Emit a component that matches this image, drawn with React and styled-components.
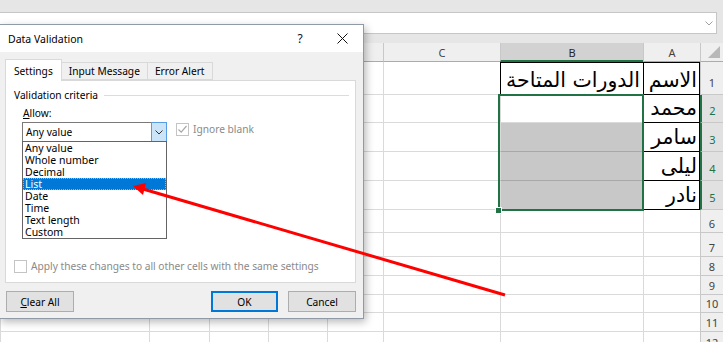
import React from 'react';
import styled, { createGlobalStyle } from 'styled-components';

const UI_FONT = `"Noto Sans", "Open Sans", "Liberation Sans", sans-serif`;
const AR_FONT = `"DejaVu Sans", "Noto Sans", sans-serif`;

const GlobalStyle = createGlobalStyle`
  html, body { margin: 0; padding: 0; overflow: hidden; background: #e6e6e6; }
  * { box-sizing: border-box; }
`;

const Page = styled.div`
  position: relative;
  width: 723px;
  height: 342px;
  overflow: hidden;
  background: #e6e6e6;
  padding-top: 12px;
  display: flex;
  flex-direction: column;
  font-family: ${UI_FONT};
`;

const FormulaBar = styled.div`
  flex-shrink: 0;
  height: 22px;
  margin-right: 6px;
  background: #fff;
  border: 1px solid #c6c6c6;
  border-left: none;
  display: flex;
  align-items: center;
  justify-content: flex-end;
  padding-right: 3px;
`;

const Sheet = styled.div`
  flex-shrink: 0;
  margin-top: 9px;
  display: grid;
  direction: rtl;
  grid-template-columns: 23px 57px 143px 117px 56px 59px 59px 60px 1fr;
  grid-template-rows: 19px 33px 28px 29px 29px 29px 23px 24px 19px 19px 18px 19px 20px;
  background: #fff;
`;

const Corner = styled.div`
  background: #efefef;
  border-bottom: 1px solid #ababab;
  border-left: 1px solid #c8c8c8;
  display: flex;
  align-items: flex-end;
  justify-content: flex-start;
  padding: 0 3px 3px 0;
`;

const ColHeader = styled.div`
  background: ${p => (p.$sel ? '#d2d2d2' : '#efefef')};
  color: ${p => (p.$sel ? '#262626' : '#444')};
  border-left: 1px solid #c8c8c8;
  border-bottom: ${p => (p.$sel ? '2px solid #217346' : '1px solid #ababab')};
  font-size: 11px;
  display: flex;
  align-items: center;
  justify-content: center;
  padding-top: ${p => (p.$sel ? '1px' : '0')};
`;

const RowHeader = styled.div`
  background: ${p => (p.$sel ? '#e1e1e1' : '#efefef')};
  color: ${p => (p.$sel ? '#217346' : '#444')};
  border-bottom: 1px solid #c8c8c8;
  border-left: ${p => (p.$sel ? '2px solid #217346' : '1px solid #c8c8c8')};
  font-size: 11px;
  display: flex;
  align-items: flex-end;
  justify-content: center;
  padding-bottom: ${p => (p.$big ? '4px' : '1px')};
`;

const Cell = styled.div`
  background: ${p => (p.$shade ? '#c8c8c8' : '#fff')};
  border-left: 1px solid ${p => (p.$boxed ? '#000' : '#dadada')};
  border-bottom: 1px solid ${p => (p.$boxed ? '#000' : p.$shade ? '#a8a8a8' : '#dadada')};
  box-shadow: ${p =>
    [p.$top ? 'inset 0 1px 0 #000' : null, p.$right ? 'inset -1px 0 0 #000' : null]
      .filter(Boolean)
      .join(', ') || 'none'};
  display: flex;
  align-items: flex-end;
  justify-content: flex-start;
  padding: 0 3px 4px;
  font-family: ${AR_FONT};
  font-size: 20.5px;
  line-height: 1;
  color: #000;
  white-space: nowrap;
  overflow: hidden;
`;

const Selection = styled.div`
  position: absolute;
  left: 498px;
  top: 94px;
  width: 146px;
  height: 117px;
  border: 2px solid #217346;
  pointer-events: none;
`;

const FillHandle = styled.div`
  position: absolute;
  left: -5px;
  bottom: -5px;
  width: 7px;
  height: 7px;
  background: #217346;
  border: 1px solid #fff;
`;

/* Dialog */
const Dialog = styled.div`
  position: absolute;
  left: -1px;
  top: 24px;
  width: 365px;
  height: 295px;
  border: 1px solid #8f9aa6;
  background: #f0f0f0;
  box-shadow: 2px 3px 8px rgba(0, 0, 0, 0.28);
  display: flex;
  flex-direction: column;
  font-family: ${UI_FONT};
  font-size: 10.2px;
  color: #000;
`;

const TitleBar = styled.div`
  height: 27px;
  background: #fff;
  display: flex;
  align-items: center;
  padding-left: 8px;
  font-size: 10.5px;
`;

const TitleText = styled.div`
  flex: 1;
`;

const TitleButton = styled.div`
  width: 42px;
  height: 27px;
  display: flex;
  align-items: center;
  justify-content: center;
  font-size: 12px;
  color: #111;
`;

const Body = styled.div`
  flex: 1;
  display: flex;
  flex-direction: column;
  padding: 6px 7px 0 5px;
`;

const Tabs = styled.div`
  height: 22px;
  display: flex;
  align-items: flex-end;
`;

const Tab = styled.div`
  height: ${p => (p.$active ? '22px' : '18px')};
  padding: 0 ${p => (p.$active ? '8px' : '7px')};
  margin-bottom: ${p => (p.$active ? '-1px' : '0')};
  background: ${p => (p.$active ? '#fff' : '#f0f0f0')};
  border: 1px solid #d9d9d9;
  border-bottom: ${p => (p.$active ? 'none' : '1px solid #d9d9d9')};
  border-left: ${p => (p.$first || p.$active ? '1px solid #d9d9d9' : 'none')};
  display: flex;
  align-items: center;
  position: relative;
  z-index: ${p => (p.$active ? 1 : 0)};
  padding-top: ${p => (p.$active ? '1px' : '0')};
`;

const Panel = styled.div`
  height: 203px;
  background: #fff;
  border: 1px solid #d9d9d9;
  display: flex;
  flex-direction: column;
  padding: 0 6px 0 8px;
`;

const GroupHeader = styled.div`
  margin-top: 7px;
  height: 14px;
  display: flex;
  align-items: center;
`;

const GroupLine = styled.div`
  flex: 1;
  height: 1px;
  background: #dcdcdc;
  margin-left: 6px;
`;

const FieldLabel = styled.div`
  margin: 4px 0 0 9px;
  height: 14px;
  line-height: 14px;
`;

const FieldRow = styled.div`
  margin: 2px 0 0 8px;
  display: flex;
  align-items: flex-start;
`;

const ComboWrap = styled.div`
  position: relative;
  width: 145px;
  height: 20px;
`;

const Combo = styled.div`
  width: 100%;
  height: 100%;
  border: 1px solid #7a7a7a;
  background: #fff;
  display: flex;
  align-items: stretch;
`;

const ComboText = styled.div`
  flex: 1;
  display: flex;
  align-items: center;
  padding-left: 3px;
`;

const ComboButton = styled.div`
  width: 16px;
  background: #cce4f7;
  border: 1px solid #569de5;
  margin: -1px -1px -1px 0;
  display: flex;
  align-items: center;
  justify-content: center;
`;

const DropList = styled.div`
  position: absolute;
  left: 0;
  top: 19px;
  width: 145px;
  height: 98px;
  background: #fff;
  border: 1px solid #646464;
  z-index: 2;
`;

const DropItem = styled.div`
  height: 12px;
  line-height: 12px;
  padding-left: 2px;
  background: ${p => (p.$sel ? '#0078d7' : 'transparent')};
  color: ${p => (p.$sel ? '#fff' : '#000')};
  outline: ${p => (p.$sel ? '1px dotted #e8a050' : 'none')};
  outline-offset: -1px;
  white-space: nowrap;
  font-size: 10.5px;
`;

const CheckWrap = styled.div`
  display: flex;
  align-items: center;
  gap: ${p => p.$gap || 3}px;
  color: #8a8a8a;
  margin-left: ${p => p.$ml || 0}px;
  margin-top: ${p => p.$mt || 0}px;
`;

const ApplyRow = styled(CheckWrap)`
  margin-top: auto;
  margin-bottom: 9px;
  margin-left: 0;
`;

const ButtonRow = styled.div`
  margin-top: 8px;
  display: flex;
  padding-left: 1px;
`;

const Btn = styled.div`
  width: ${p => p.$w || 68}px;
  height: 21px;
  background: #e1e1e1;
  border: 1px solid ${p => (p.$default ? '#0078d7' : '#adadad')};
  box-shadow: ${p => (p.$default ? 'inset 0 0 0 1px #0078d7' : 'none')};
  display: flex;
  align-items: center;
  justify-content: center;
  margin-left: ${p => p.$ml || 0}px;
`;

const Underlined = styled.span`
  text-decoration: underline;
`;

const ArrowLayer = styled.svg`
  position: absolute;
  left: 0;
  top: 0;
  pointer-events: none;
  z-index: 5;
`;

const Check = ({ checked }) => (
  <svg width="13" height="13" viewBox="0 0 13 13">
    <rect x="0.5" y="0.5" width="12" height="12" fill="#fff" stroke="#c4c4c4" />
    {checked && <polyline points="2.5,6.5 5.2,9.2 10.5,3" fill="none" stroke="#a9a9a9" strokeWidth="1.2" />}
  </svg>
);

const columns = ['A', 'B', 'C', 'D', 'E', 'F', 'G', 'H'];
const rowsData = [
  { a: 'الاسم', b: 'الدورات المتاحة' },
  { a: 'محمد' },
  { a: 'سامر' },
  { a: 'ليلى' },
  { a: 'نادر' },
];
const TOTAL_ROWS = 12;

export default function App() {
  const rows = [];
  for (let r = 1; r <= TOTAL_ROWS; r++) {
    const d = rowsData[r - 1];
    const sel = r >= 2 && r <= 5;
    rows.push(
      <RowHeader key={`rh${r}`} $sel={sel} $big={r <= 5}>
        {r}
      </RowHeader>
    );
    columns.forEach(c => {
      const boxed = (c === 'A' && r <= 5) || (c === 'B' && r === 1);
      const content = d ? (c === 'A' ? d.a : c === 'B' ? d.b : null) : null;
      rows.push(
        <Cell
          key={`${c}${r}`}
          $boxed={boxed}
          $top={boxed && r === 1}
          $right={boxed && c === 'A'}
          $shade={c === 'B' && r >= 3 && r <= 5}
        >
          {content}
        </Cell>
      );
    });
  }

  return (
    <>
      <GlobalStyle />
      <Page>
        <FormulaBar>
          <svg width="8" height="5" viewBox="0 0 8 5">
            <polyline points="0.5,0.5 4,4 7.5,0.5" fill="none" stroke="#a0a0a0" strokeWidth="1" />
          </svg>
        </FormulaBar>
        <Sheet>
          <Corner>
            <svg width="12" height="12" viewBox="0 0 12 12">
              <polygon points="0,12 12,12 12,0" fill="#b8b8b8" />
            </svg>
          </Corner>
          {columns.map(c => (
            <ColHeader key={c} $sel={c === 'B'}>
              {c}
            </ColHeader>
          ))}
          {rows}
        </Sheet>

        <Selection>
          <FillHandle />
        </Selection>

        <Dialog>
          <TitleBar>
            <TitleText>Data Validation</TitleText>
            <TitleButton>?</TitleButton>
            <TitleButton>
              <svg width="11" height="11" viewBox="0 0 11 11">
                <path d="M0.5 0.5 L10.5 10.5 M10.5 0.5 L0.5 10.5" stroke="#111" strokeWidth="1" />
              </svg>
            </TitleButton>
          </TitleBar>
          <Body>
            <Tabs>
              <Tab $active $first>Settings</Tab>
              <Tab>Input Message</Tab>
              <Tab>Error Alert</Tab>
            </Tabs>
            <Panel>
              <GroupHeader>
                Validation criteria
                <GroupLine />
              </GroupHeader>
              <FieldLabel>
                <Underlined>A</Underlined>llow:
              </FieldLabel>
              <FieldRow>
                <ComboWrap>
                  <Combo>
                    <ComboText>Any value</ComboText>
                    <ComboButton>
                      <svg width="8" height="5" viewBox="0 0 8 5">
                        <polyline points="0.5,0.5 4,4 7.5,0.5" fill="none" stroke="#333" strokeWidth="1" />
                      </svg>
                    </ComboButton>
                  </Combo>
                  <DropList>
                    {['Any value', 'Whole number', 'Decimal', 'List', 'Date', 'Time', 'Text length', 'Custom'].map(t => (
                      <DropItem key={t} $sel={t === 'List'}>
                        {t}
                      </DropItem>
                    ))}
                  </DropList>
                </ComboWrap>
                <CheckWrap $ml={9} $gap={4}>
                  <Check checked />
                  Ignore blank
                </CheckWrap>
              </FieldRow>
              <ApplyRow $gap={4}>
                <Check />
                Apply these changes to all other cells with the same settings
              </ApplyRow>
            </Panel>
            <ButtonRow>
              <Btn $w={68}>
                <span>
                  <Underlined>C</Underlined>lear All
                </span>
              </Btn>
              <Btn $w={67} $ml={137} $default>
                OK
              </Btn>
              <Btn $w={68} $ml={10}>
                Cancel
              </Btn>
            </ButtonRow>
          </Body>
        </Dialog>

        <ArrowLayer width="723" height="342" viewBox="0 0 723 342">
          <line x1="505" y1="295" x2="143" y2="189" stroke="#ff0000" strokeWidth="3" />
          <polygon points="133,186 146,183 143,195" fill="#ff0000" />
        </ArrowLayer>
      </Page>
    </>
  );
}
